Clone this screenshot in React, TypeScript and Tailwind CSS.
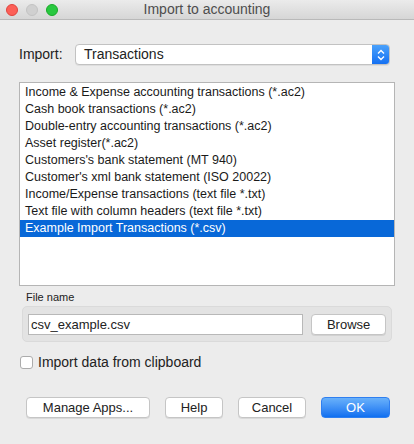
import { useState } from "react";

const items = [
  "Income & Expense accounting transactions (*.ac2)",
  "Cash book transactions (*.ac2)",
  "Double-entry accounting transactions (*.ac2)",
  "Asset register(*.ac2)",
  "Customers's bank statement (MT 940)",
  "Customer's xml bank statement (ISO 20022)",
  "Income/Expense transactions (text file *.txt)",
  "Text file with column headers (text file *.txt)",
  "Example Import Transactions (*.csv)",
];

function Btn({ label, className }: { label: string; className: string }) {
  return (
    <button
      className={`h-[21px] rounded-[4px] border border-[#c5c5c5] bg-white text-[13px] text-[#222] shadow-[0_1px_0_rgba(0,0,0,0.08)] ${className}`}
    >
      {label}
    </button>
  );
}

export default function App() {
  const [selected, setSelected] = useState(8);
  const [clip, setClip] = useState(false);

  return (
    <div
      className="w-[414px] h-[444px] bg-[#ececec] text-[13px] text-[#222] flex flex-col overflow-hidden"
      style={{ fontFamily: "'Liberation Sans', Arial, sans-serif" }}
    >
      {/* title bar */}
      <div className="relative h-[20px] flex items-center justify-center bg-gradient-to-b from-[#ebebeb] to-[#d6d6d6] border-b border-[#b9b9b9]">
        <div className="absolute left-[6px] top-[4px] flex gap-[8px]">
          <span className="w-[12px] h-[12px] rounded-full bg-[#fc5f57] border border-[#e0443e]" />
          <span className="w-[12px] h-[12px] rounded-full bg-[#d0d0d0] border border-[#c3c3c3]" />
          <span className="w-[12px] h-[12px] rounded-full bg-[#29c840] border border-[#1aab29]" />
        </div>
        <span className="text-[14px] text-[#4d4d4d]">Import to accounting</span>
      </div>

      {/* import combo */}
      <div className="flex items-center mt-[24px] pl-[19px] pr-[24px] text-[14px]">
        <span className="w-[56px]">Import:</span>
        <div className="flex-1 h-[21px] flex items-stretch rounded-[4px] bg-white border border-[#c2c2c2] shadow-[0_1px_0_rgba(0,0,0,0.06)] overflow-hidden">
          <span className="flex-1 pl-[8px] leading-[19px]">Transactions</span>
          <span className="w-[17px] flex items-center justify-center bg-gradient-to-b from-[#4aa1fb] to-[#1470f2]">
            <svg width="8" height="12" viewBox="0 0 8 12" fill="none" stroke="white" strokeWidth="1.4">
              <path d="M1 4.5 L4 1.5 L7 4.5" />
              <path d="M1 7.5 L4 10.5 L7 7.5" />
            </svg>
          </span>
        </div>
      </div>

      {/* list */}
      <div className="mx-[19px] mt-[17px] h-[204px] bg-white border border-[#b5b5b5] pt-[1px] text-[12.5px]">
        {items.map((it, i) => (
          <div
            key={it}
            onClick={() => setSelected(i)}
            className={`h-[17px] leading-[17px] px-[5px] whitespace-nowrap ${
              selected === i ? "bg-[#0868d8] text-white" : "text-[#1a1a1a]"
            }`}
          >
            {it}
          </div>
        ))}
      </div>

      {/* file name */}
      <div className="mt-[4px] pl-[26px] text-[11px] leading-[15px]">File name</div>
      <div className="mx-[22px] mt-[1px] h-[36px] rounded-[5px] bg-[#e3e3e3] border border-[#dadada] flex items-center gap-[8px] pl-[5px] pr-[5px]">
        <div className="w-[276px] h-[21px] bg-white border border-[#b8b8b8] pl-[2px] leading-[19px] text-[13px]">
          csv_example.csv
        </div>
        <Btn label="Browse" className="w-[75px]" />
      </div>

      {/* clipboard checkbox */}
      <label className="flex items-center h-[20px] mt-[10px] pl-[20px] gap-[5px] cursor-default text-[14px]">
        <span
          onClick={() => setClip(!clip)}
          className="w-[13px] h-[13px] rounded-[3px] bg-white border border-[#acacac] flex items-center justify-center text-[10px] leading-none"
        >
          {clip ? "✓" : ""}
        </span>
        <span>Import data from clipboard</span>
      </label>

      {/* buttons */}
      <div className="flex items-center mt-[25px] pl-[26px] gap-[15px]">
        <Btn label="Manage Apps..." className="w-[124px]" />
        <Btn label="Help" className="w-[58px]" />
        <Btn label="Cancel" className="w-[68px]" />
        <button className="w-[69px] h-[21px] rounded-[4px] bg-gradient-to-b from-[#69b1fa] to-[#0d6ff0] border border-[#2f7ff0] text-white text-[13px]">
          OK
        </button>
      </div>
    </div>
  );
}
